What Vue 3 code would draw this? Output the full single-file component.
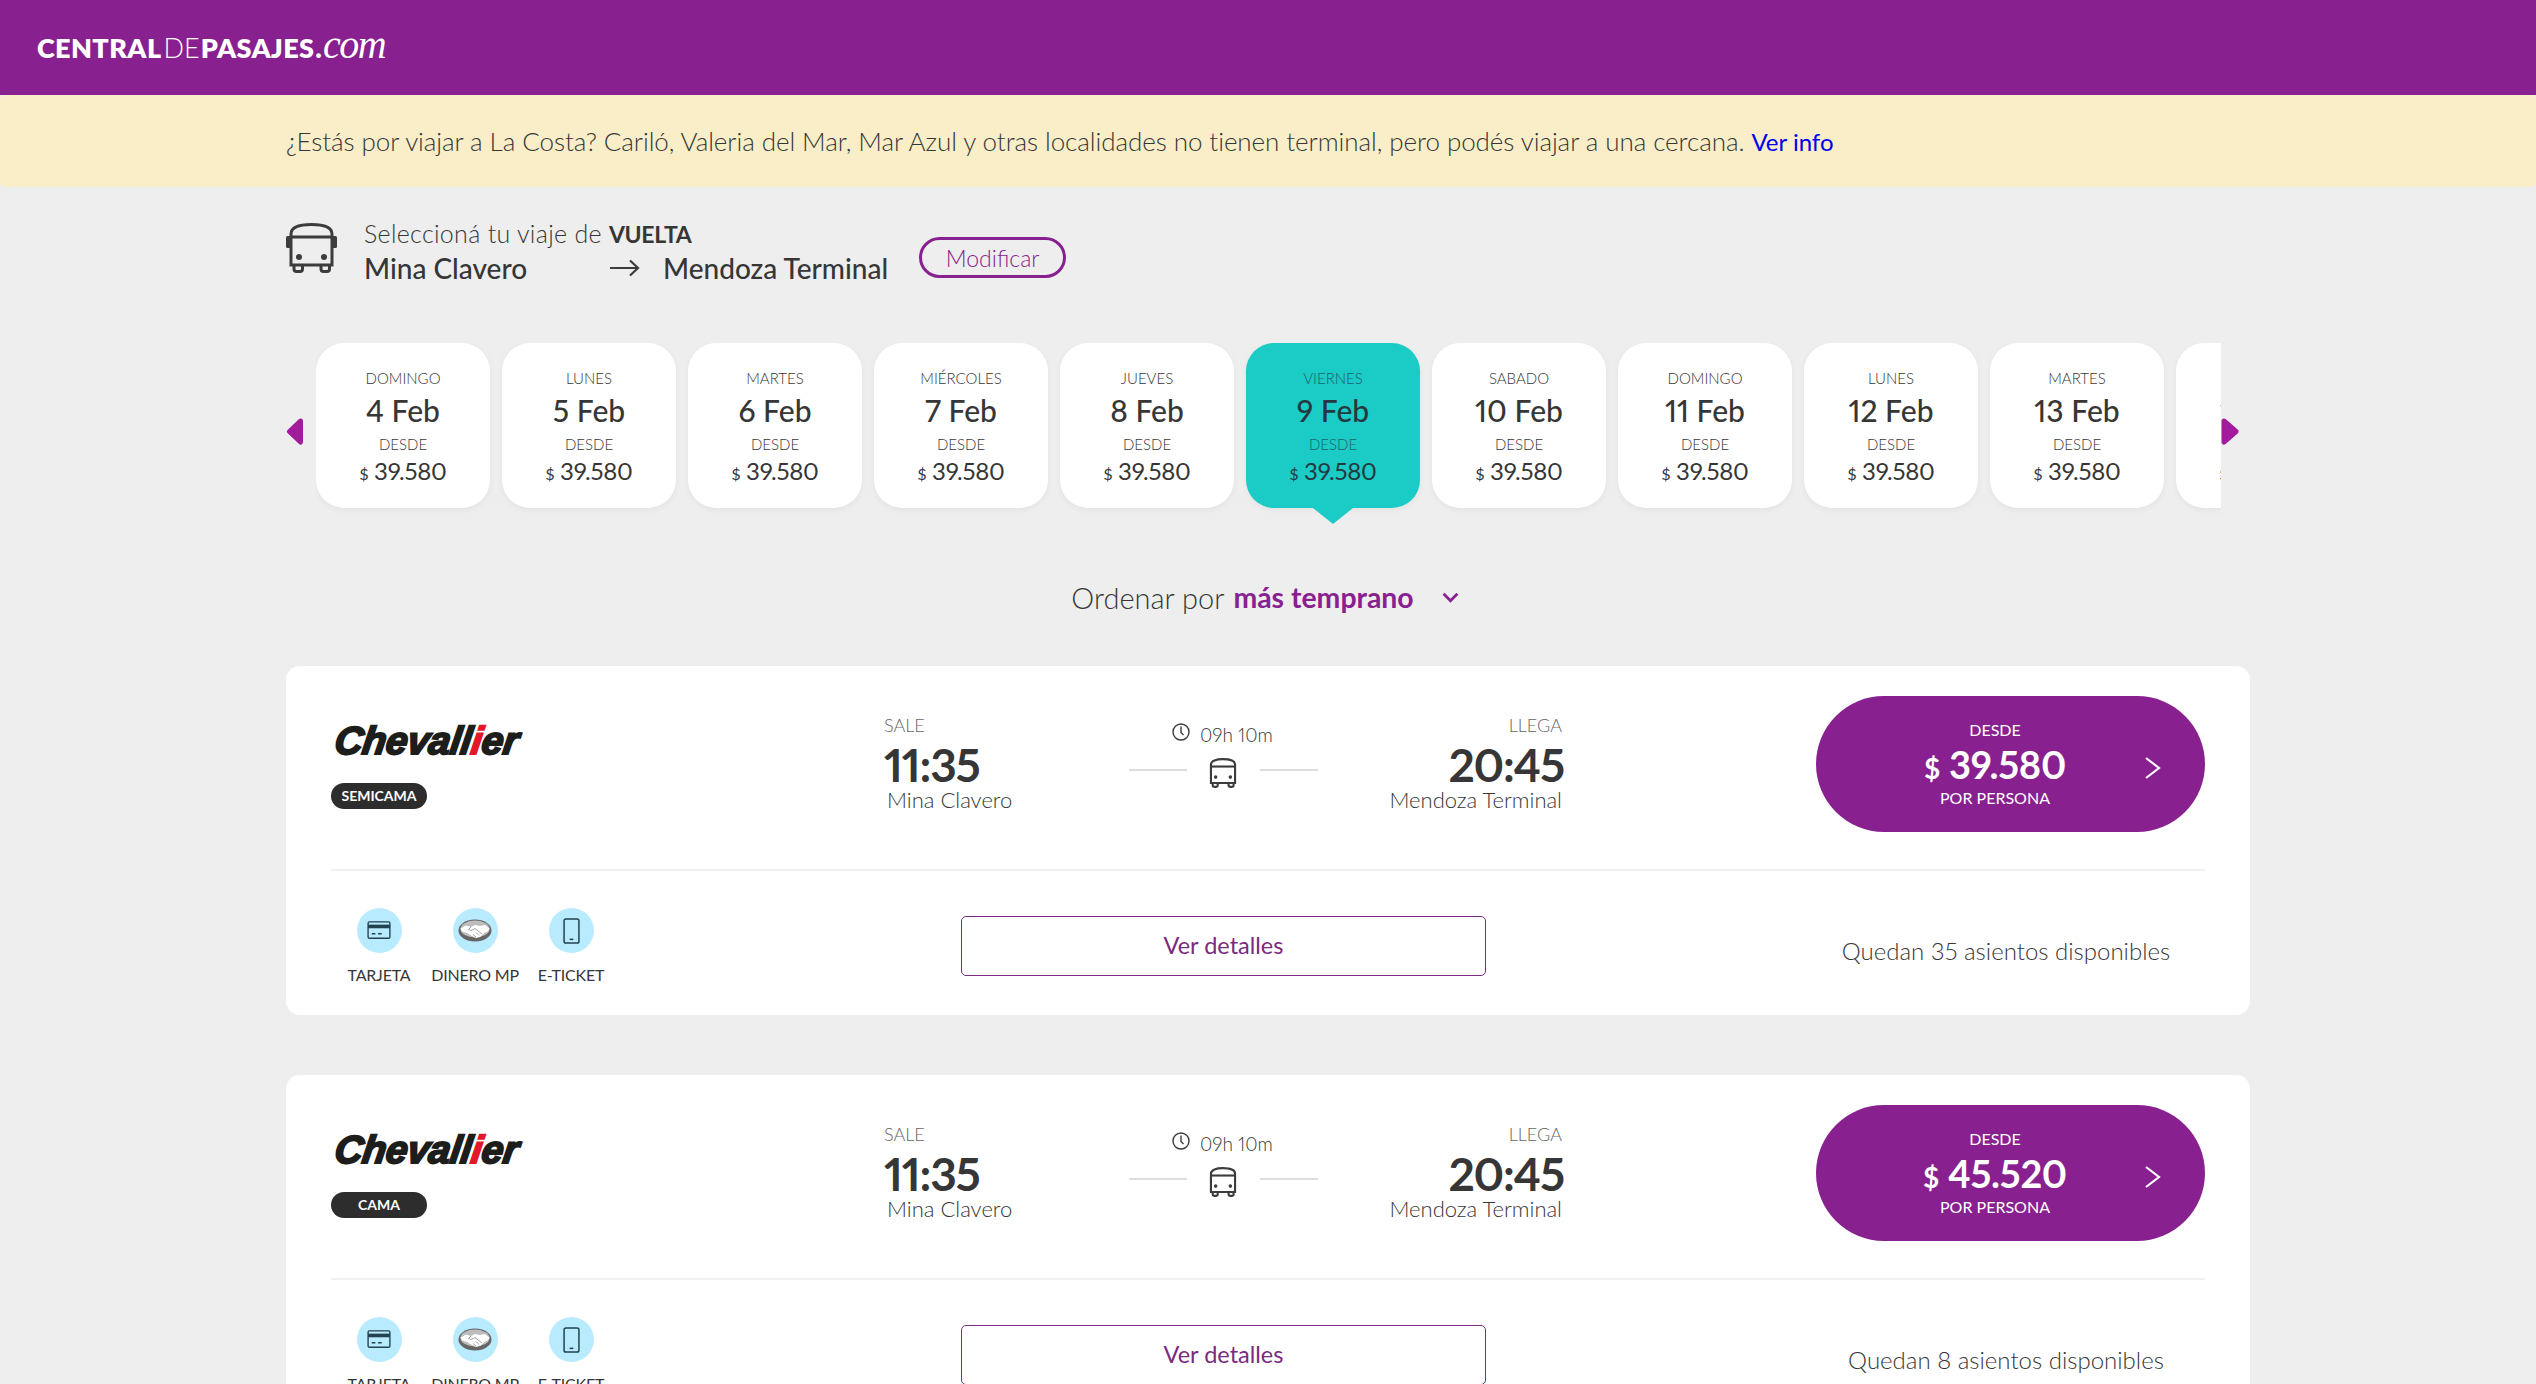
<script setup>
const days = [
  { dow: 'DOMINGO', date: '4 Feb' },
  { dow: 'LUNES', date: '5 Feb' },
  { dow: 'MARTES', date: '6 Feb' },
  { dow: 'MIÉRCOLES', date: '7 Feb' },
  { dow: 'JUEVES', date: '8 Feb' },
  { dow: 'VIERNES', date: '9 Feb', active: true },
  { dow: 'SABADO', date: '10 Feb' },
  { dow: 'DOMINGO', date: '11 Feb' },
  { dow: 'LUNES', date: '12 Feb' },
  { dow: 'MARTES', date: '13 Feb' },
  { dow: 'MIÉRCOLES', date: '14 Feb' }
]
const trips = [
  { cat: 'SEMICAMA', price: '39.580', seats: 35 },
  { cat: 'CAMA', price: '45.520', seats: 8 }
]
</script>

<template>
  <div class="page">
    <header class="topbar">
      <div class="brand"><b>CENTRAL</b><span class="de">DE</span><b>PASAJES</b><i>.com</i></div>
    </header>
    <div class="notice">
      <p>¿Estás por viajar a La Costa? Cariló, Valeria del Mar, Mar Azul y otras localidades no tienen terminal, pero podés viajar a una cercana. <a>Ver info</a></p>
    </div>
    <main class="wrap">
      <section class="route">
        <svg class="route-bus" viewBox="0 0 51 50" fill="none" stroke="#3c3c3c" stroke-width="3">
          <path d="M5 42V11C5 4 14 1.500 25.500 1.500S46 4 46 11V42Z" />
          <path d="M5 14H46" />
          <path d="M8 42V46a2.500 2.500 0 0 0 2.500 2.500H14a2.500 2.500 0 0 0 2.500-2.500V42M35 42V46a2.500 2.500 0 0 0 2.500 2.500H41a2.500 2.500 0 0 0 2.500-2.500V42" />
          <rect x="0" y="13" width="5" height="12" rx="1.500" fill="#3c3c3c" stroke="none" />
          <rect x="46" y="13" width="5" height="12" rx="1.500" fill="#3c3c3c" stroke="none" />
          <circle cx="13" cy="34" r="3" fill="#3c3c3c" stroke="none" />
          <circle cx="38" cy="34" r="3" fill="#3c3c3c" stroke="none" />
        </svg>
        <div class="route-text">
          <div class="route-title">Seleccioná tu viaje de <b>VUELTA</b></div>
          <div class="route-places">
            <span class="from">Mina Clavero</span>
            <svg class="route-arrow" viewBox="0 0 30 18" fill="none" stroke="#3c3c3c" stroke-width="2.200">
              <path d="M0 9H28M20 1.500L28 9L20 16.500" />
            </svg>
            <span>Mendoza Terminal</span>
          </div>
        </div>
        <button class="modify">Modificar</button>
      </section>

      <section class="dates">
        <svg class="nav nav-left" viewBox="0 0 17 27"><path d="M14 3L3 13.500L14 24Z" /></svg>
        <div class="strip">
          <div v-for="d in days" :key="d.date" class="day" :class="{ active: d.active }">
            <div class="dow">{{ d.dow }}</div>
            <div class="date">{{ d.date }}</div>
            <div class="dow from-label">DESDE</div>
            <div class="amount"><small>$</small> 39.580</div>
          </div>
        </div>
        <svg class="nav nav-right" viewBox="0 0 18 27"><path d="M3 3L15 13.500L3 24Z" /></svg>
      </section>

      <div class="sort">
        <span>Ordenar por</span>
        <b>más temprano</b>
        <svg viewBox="0 0 16 10" fill="none" stroke="#88218f" stroke-width="2.600"><path d="M1.500 1.500L8 8L14.500 1.500" /></svg>
      </div>

      <article v-for="t in trips" :key="t.cat" class="trip">
        <div class="trip-top">
          <div class="company">
            <div class="logo">Chevall<em>i</em>er</div>
            <span class="badge">{{ t.cat }}</span>
          </div>
          <div class="stop">
            <div class="label">SALE</div>
            <div class="time">11:35</div>
            <div class="place">Mina Clavero</div>
          </div>
          <div class="mid">
            <div class="duration">
              <svg viewBox="0 0 20 20" fill="none" stroke="#3c3c3c" stroke-width="1.400"><circle cx="10" cy="10" r="8" /><path d="M10 4.500V10.500L12.500 13" /></svg>
              <span>09h 10m</span>
            </div>
            <div class="track">
              <i></i>
              <svg viewBox="0 0 51 50" fill="none" stroke="#3c3c3c" stroke-width="3.600">
                <path d="M5 42V11C5 4 14 1.500 25.500 1.500S46 4 46 11V42Z" />
                <path d="M5 14H46" />
                <path d="M8 42V46a2.500 2.500 0 0 0 2.500 2.500H14a2.500 2.500 0 0 0 2.500-2.500V42M35 42V46a2.500 2.500 0 0 0 2.500 2.500H41a2.500 2.500 0 0 0 2.500-2.500V42" />
                <circle cx="13" cy="32" r="3" fill="#3c3c3c" stroke="none" />
                <circle cx="38" cy="32" r="3" fill="#3c3c3c" stroke="none" />
              </svg>
              <i></i>
            </div>
          </div>
          <div class="stop end">
            <div class="label">LLEGA</div>
            <div class="time">20:45</div>
            <div class="place">Mendoza Terminal</div>
          </div>
          <div></div>
          <button class="buy">
            <span class="buy-text">
              <span class="buy-small">DESDE</span>
              <span class="buy-price"><small>$</small> {{ t.price }}</span>
              <span class="buy-small">POR PERSONA</span>
            </span>
            <svg viewBox="0 0 18 24" fill="none" stroke="#fff" stroke-width="2.200"><path d="M2 2L15 12L2 22" /></svg>
          </button>
        </div>
        <div class="trip-bottom">
          <div class="pays">
            <div class="pay">
              <span class="dot">
                <svg viewBox="0 0 26 22" fill="none" stroke="#23424f" stroke-width="1.500">
                  <rect x="1" y="1" width="24" height="18" rx="1.500" />
                  <rect x="1" y="4" width="24" height="4" fill="#23424f" stroke="none" />
                  <path d="M5 14H9M12 14H16" />
                </svg>
              </span>
              <span>TARJETA</span>
            </div>
            <div class="pay">
              <span class="dot">
                <svg viewBox="0 0 34 24">
                  <ellipse cx="17" cy="12" rx="16.500" ry="11" fill="#666" />
                  <ellipse cx="17" cy="10.500" rx="14.500" ry="8.500" fill="#bdbdbd" />
                  <path d="M2.500 10L8 7L13 8.500L17 6.500L22 7.500L27 6.500L31.500 10L30 13L27 14L22 18.500L18 19.500L14 17.500L9 14.500L4 13Z" fill="#fff" />
                  <path d="M13 8.500L10.500 11L13 12L17 10L24 15.500M15 16L18 18.500M18 14L21 17" fill="none" stroke="#8a8a8a" stroke-width=".8" />
                </svg>
              </span>
              <span>DINERO MP</span>
            </div>
            <div class="pay">
              <span class="dot">
                <svg viewBox="0 0 18 28" fill="none" stroke="#23424f" stroke-width="1.600">
                  <rect x="1" y="1" width="16" height="26" rx="2" />
                  <path d="M7 23H11" />
                </svg>
              </span>
              <span>E-TICKET</span>
            </div>
          </div>
          <button class="details">Ver detalles</button>
          <div class="seats">Quedan {{ t.seats }} asientos disponibles</div>
        </div>
      </article>
    </main>
  </div>
</template>

<style>
html, body {
  margin: 0;
  height: 100%;
  overflow: hidden;
  background: #eeeeee;
}
</style>

<style scoped>
.page {
  height: 1384px;
  overflow: hidden;
  background: #eeeeee;
  font-family: Lato, "Liberation Sans", sans-serif;
  font-variant-numeric: proportional-nums;
  color: #363636;
}
.topbar {
  height: 95px;
  background: #88218f;
  padding: 0 0 6px 37px;
  display: flex;
  align-items: center;
  box-sizing: border-box;
}
.brand {
  color: #fff;
  font-size: 27px;
  display: flex;
  align-items: baseline;
}
.brand b {
  font-weight: 800;
  letter-spacing: .4px;
}
.brand .de {
  font-weight: 300;
  margin: 0 1px 0 2px;
}
.brand i {
  font-family: "Liberation Serif", serif;
  font-size: 40px;
  letter-spacing: -1.500px;
}
.notice {
  height: 92px;
  background: #f9eec7;
  border-radius: 5px;
  display: flex;
  align-items: center;
  padding-left: 286px;
}
.notice p {
  margin: 0;
  font-size: 26px;
  font-weight: 300;
  letter-spacing: -.07px;
}
.notice a {
  color: #0000ee;
  font-size: 24px;
  font-weight: 400;
  letter-spacing: 0;
}
.wrap {
  width: 1964px;
  margin: 0 auto;
}
.route {
  height: 156px;
  padding-top: 35px;
  box-sizing: border-box;
  display: flex;
  align-items: flex-start;
}
.route-bus {
  width: 51px;
  height: 50px;
  margin-top: 1px;
  flex: none;
}
.route-text {
  margin-left: 27px;
  margin-top: -5px;
}
.route-title {
  font-size: 25px;
  font-weight: 300;
  line-height: 32px;
  letter-spacing: .3px;
}
.route-title b {
  font-size: 23px;
  font-weight: 700;
  letter-spacing: -.3px;
}
.route-places {
  font-size: 28px;
  font-weight: 500;
  line-height: 36px;
  display: flex;
  align-items: center;
}
.from {
  width: 246px;
}
.route-arrow {
  width: 30px;
  height: 18px;
  margin-right: 23px;
}
.modify {
  margin: 15px 0 0 31px;
  width: 147px;
  height: 41px;
  border: 3px solid #88218f;
  border-radius: 21px;
  background: transparent;
  color: #88218f;
  font: 300 23px Lato, sans-serif;
  padding: 0;
}
.dates {
  position: relative;
  padding-left: 30px;
  padding-right: 29px;
}
.nav {
  position: absolute;
  top: 75px;
  width: 18px;
  height: 27px;
  fill: #a21a9d;
  stroke: #a21a9d;
  stroke-width: 5;
  stroke-linejoin: round;
}
.nav-left {
  left: 0;
}
.nav-right {
  right: 11px;
}
.strip {
  display: flex;
  gap: 12px;
  overflow: hidden;
  padding-bottom: 26px;
}
.day {
  flex: none;
  position: relative;
  width: 174px;
  height: 165px;
  background: #fff;
  border-radius: 28px;
  box-shadow: 0 2px 6px rgba(0, 0, 0, .05);
  text-align: center;
  padding-top: 25px;
  box-sizing: border-box;
}
.day.active {
  background: #1bcbc5;
}
.day.active::after {
  content: "";
  position: absolute;
  left: 50%;
  bottom: -16px;
  margin-left: -20px;
  border: 20px solid transparent;
  border-bottom: 0;
  border-top: 16px solid #1bcbc5;
}
.day.active .dow {
  color: #1d6269;
}
.day.active .date,
.day.active .amount {
  color: #243840;
}
.dow {
  font-size: 15px;
  font-weight: 300;
  line-height: 20px;
}
.date {
  font-size: 30px;
  font-weight: 500;
  line-height: 42px;
  margin-top: 1px;
}
.from-label {
  margin-top: 3px;
}
.amount {
  font-size: 24px;
  font-weight: 400;
  line-height: 34px;
  letter-spacing: -.3px;
}
.amount small {
  font-size: 16px;
}
.sort {
  margin-top: 36px;
  display: flex;
  justify-content: center;
  align-items: center;
  height: 54px;
  padding-right: 6px;
  font-size: 29px;
  font-weight: 300;
  margin-bottom: 42px;
}
.sort b {
  color: #88218f;
  font-size: 28.400px;
  font-weight: 700;
  margin-left: 9px;
}
.sort svg {
  width: 17px;
  height: 11px;
  margin-left: 28px;
}
.trip {
  height: 349px;
  background: #fff;
  border-radius: 14px;
  margin-bottom: 60px;
  padding: 0 45px;
  box-sizing: border-box;
}
.trip-top {
  height: 203px;
  border-bottom: 2px solid #f1f1f1;
  box-sizing: content-box;
  display: grid;
  grid-template-columns: 553px 245px 189px 244px 1fr 389px;
}
.company {
  padding-top: 56px;
}
.logo {
  font: italic 700 39px/38px "Liberation Sans", sans-serif;
  -webkit-text-stroke: 2px #1d1d1b;
  letter-spacing: -.3px;
  color: #1d1d1b;
  margin-left: 4px;
  display: inline-block;
  transform: skewX(-8deg);
}
.logo em {
  color: #e3172a;
  -webkit-text-stroke-color: #e3172a;
}
.badge {
  display: block;
  width: 96px;
  height: 26px;
  line-height: 26px;
  margin-top: 23px;
  border-radius: 13px;
  background: #2d2d2d;
  color: #fff;
  text-align: center;
  font-size: 14px;
  font-weight: 700;
}
.stop {
  padding-top: 48px;
}
.stop.end {
  text-align: right;
}
.label {
  font-size: 18px;
  font-weight: 300;
  line-height: 22px;
  color: #666;
}
.time {
  font-size: 46px;
  font-weight: 700;
  line-height: 44px;
  letter-spacing: -1.200px;
  margin-top: 7px;
}
.end .time {
  margin-right: -2px;
}
.place {
  font-size: 22px;
  font-weight: 300;
  line-height: 26px;
  padding-left: 3px;
}
.mid {
  padding-top: 55px;
}
.duration {
  display: flex;
  align-items: center;
  justify-content: flex-start;
  padding-left: 42px;
  gap: 9px;
  font-size: 19px;
  font-weight: 300;
  height: 26px;
}
.duration svg {
  width: 20px;
  height: 20px;
  margin-top: -4px;
}
.track {
  display: flex;
  align-items: flex-start;
  justify-content: space-between;
  margin-top: 12px;
}
.track i {
  width: 58px;
  height: 2px;
  margin-top: 10px;
  background: #ddd;
}
.track svg {
  width: 30px;
  height: 30px;
  margin: -1px 2px 0 0;
}
.buy {
  margin-top: 30px;
  height: 136px;
  width: 389px;
  border: 0;
  border-radius: 68px;
  background: #88218f;
  color: #fff;
  display: flex;
  align-items: center;
  padding: 0 0 0 59px;
  font-family: inherit;
  font-variant-numeric: inherit;
}
.buy-text {
  width: 240px;
  display: flex;
  flex-direction: column;
  align-items: center;
}
.buy-small {
  font-size: 16px;
  font-weight: 400;
  line-height: 20px;
}
.buy-price {
  font-size: 38px;
  font-weight: 700;
  line-height: 44px;
  letter-spacing: -.3px;
  margin: 2px 0 -2px;
}
.buy-price small {
  font-size: 28px;
}
.buy svg {
  flex: none;
  width: 18px;
  height: 24px;
  margin: 7px 0 0 29px;
}
.trip-bottom {
  display: grid;
  grid-template-columns: 630px 525px 321px 398px;
  margin-right: -1px;
  padding-top: 37px;
}
.pays {
  display: flex;
}
.pay {
  width: 96px;
  display: flex;
  flex-direction: column;
  align-items: center;
  font-size: 16px;
  font-weight: 400;
  letter-spacing: -.2px;
  white-space: nowrap;
}
.dot {
  width: 45px;
  height: 45px;
  border-radius: 50%;
  background: #b9ebff;
  display: flex;
  align-items: center;
  justify-content: center;
  margin-bottom: 12px;
}
.pay:nth-child(1) svg {
  width: 24px;
  height: 20px;
}
.pay:nth-child(2) svg {
  width: 34px;
  height: 25px;
}
.pay:nth-child(3) svg {
  width: 17px;
  height: 26px;
}
.details {
  grid-column: 2;
  width: 525px;
  height: 60px;
  margin-top: 8px;
  padding: 0 0 2px;
  border: 1.500px solid #7a2a80;
  border-radius: 5px;
  background: #fff;
  color: #7a2a80;
  font: 400 23.500px Lato, sans-serif;
}
.seats {
  grid-column: 4;
  text-align: center;
  font-size: 24px;
  font-weight: 300;
  padding-top: 28px;
  white-space: nowrap;
}
</style>
